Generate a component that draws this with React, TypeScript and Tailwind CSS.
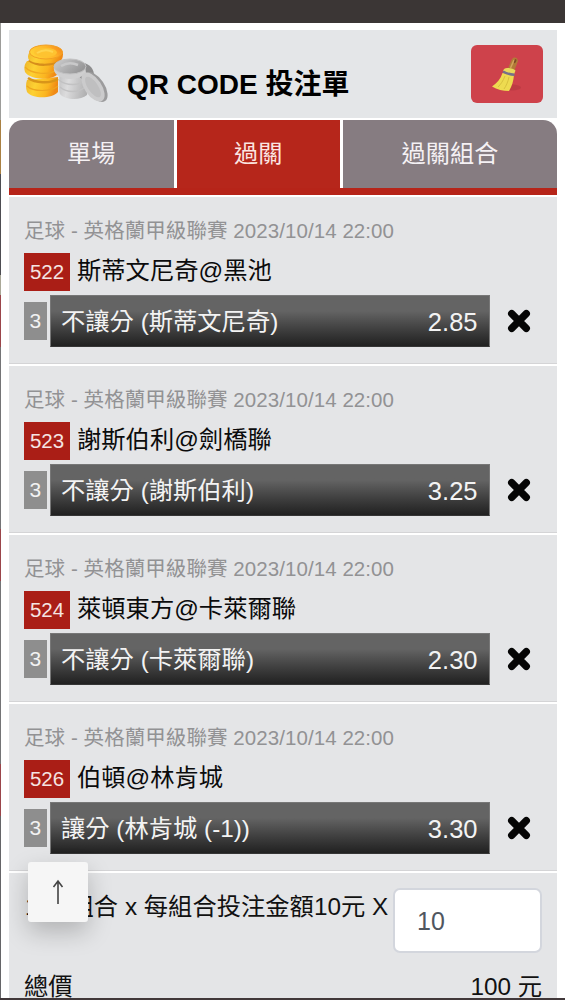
import React from 'react';

type Bet = { id: string; match: string; pick: string; odds: string };

const bets: Bet[] = [
  { id: '522', match: '斯蒂文尼奇@黑池', pick: '不讓分 (斯蒂文尼奇)', odds: '2.85' },
  { id: '523', match: '謝斯伯利@劍橋聯', pick: '不讓分 (謝斯伯利)', odds: '3.25' },
  { id: '524', match: '萊頓東方@卡萊爾聯', pick: '不讓分 (卡萊爾聯)', odds: '2.30' },
  { id: '526', match: '伯頓@林肯城', pick: '讓分 (林肯城 (-1))', odds: '3.30' },
];

function Coins() {
  return (
    <svg width="88" height="62" viewBox="0 0 88 62" aria-hidden="true">
      <defs>
        <linearGradient id="gold" x1="0" x2="1" y1="0" y2="0.2">
          <stop offset="0" stopColor="#eeb52a" />
          <stop offset="0.35" stopColor="#fdd133" />
          <stop offset="0.75" stopColor="#fbb520" />
          <stop offset="1" stopColor="#f08a16" />
        </linearGradient>
        <linearGradient id="goldTop" x1="0" x2="1" y1="0.6" y2="0.2">
          <stop offset="0" stopColor="#ffd236" />
          <stop offset="0.6" stopColor="#ffb528" />
          <stop offset="1" stopColor="#f5861a" />
        </linearGradient>
        <linearGradient id="silver" x1="0" x2="1" y1="0" y2="0.2">
          <stop offset="0" stopColor="#bcbcbd" />
          <stop offset="0.4" stopColor="#dcdcdd" />
          <stop offset="1" stopColor="#b0b0b1" />
        </linearGradient>
        <linearGradient id="silverTop" x1="0" x2="1" y1="0" y2="0.5">
          <stop offset="0" stopColor="#d2d2d3" />
          <stop offset="0.5" stopColor="#b2b2b3" />
          <stop offset="1" stopColor="#969697" />
        </linearGradient>
      </defs>
      <path d="M4 36q-2 6 0 12c5 7 25 7 31 0V33z" fill="url(#gold)" />
      <path d="M4 42c6 6 24 6 31 0" fill="none" stroke="#eda51f" strokeWidth="1.2" />
      <path d="M5 34c7 5 22 6 30 1" fill="none" stroke="#d99519" strokeWidth="2.5" />
      <path d="M4 17q-4 5-2 11c5 8 27 9 33 2V17z" fill="url(#gold)" />
      <path d="M2 23c6 7 25 9 33 2" fill="none" stroke="#f0a921" strokeWidth="1.2" />
      <path d="M6 16c8 6 23 6 32-1" fill="none" stroke="#d78e1b" strokeWidth="3" />
      <path d="M6 9q-2 4 0 7c6 5 27 5 33-1q2-5 0-8z" fill="url(#gold)" />
      <ellipse cx="23" cy="8" rx="16.500" ry="7" fill="url(#goldTop)" stroke="#f2a024" />
      <ellipse cx="22.500" cy="8.500" rx="11.500" ry="4.500" fill="#fec330" />
      <path d="M14 9q8-5 16-1" fill="none" stroke="#ffdc5b" strokeWidth="2" opacity="0.7" />
      <path d="M35 27c3 7 0 18 2 23 5 6 20 7 27 1l3-27z" fill="url(#silver)" />
      <path d="M36 36c7 6 20 6 27 0M37 43c7 6 18 6 25 0" fill="none" stroke="#c2c2c3" strokeWidth="1.500" />
      <path d="M57 18c7 1 13 4 14 12l-10 7-10-9z" fill="#8d8d8e" />
      <path d="M31 22q-1 6 3 9c8 6 23 5 29-2l-1-8z" fill="#cfcfd0" />
      <ellipse cx="47" cy="22.500" rx="16" ry="7.500" fill="url(#silverTop)" stroke="#c2c2c3" />
      <path d="M38 22q8-5 17-1" fill="none" stroke="#c9c9ca" strokeWidth="2.500" />
      <ellipse cx="72.500" cy="43" rx="9" ry="17" transform="rotate(-34 72.500 43)" fill="#9c9c9d" />
      <ellipse cx="70" cy="43" rx="8.500" ry="16.500" transform="rotate(-34 70 43)" fill="#cbcbcc" />
      <ellipse cx="70" cy="43" rx="5" ry="12" transform="rotate(-34 70 43)" fill="#bfbfc0" />
    </svg>
  );
}

function Broom() {
  return (
    <svg width="30" height="36" viewBox="0 0 30 36" aria-hidden="true">
      <ellipse cx="20" cy="31.500" rx="9" ry="3" fill="#a63238" opacity="0.4" />
      <path d="M15.500 13.500 19.700 3.500c1.600-3.500 6.600-2.300 6.200 1.700L22 15.500z" fill="#b27a38" />
      <path d="m18.500 12 3.500-8" stroke="#d3a45c" strokeWidth="1.500" />
      <ellipse cx="23.200" cy="5.200" rx="1" ry="2.200" transform="rotate(24 23.200 5.200)" fill="#7d4c25" />
      <path d="M10.500 17C8.500 23 5 27 0 30.500 5 33.500 11 35 17 35c3-5 4.500-10 5-16z" fill="#eedb50" />
      <path d="M13 20C11 25 9 28 6 31M17 21c-1 5-3 9-5 12" fill="none" stroke="#d8c03e" strokeWidth="1" />
      <path d="M11 15q1-3.500 5-3 5 0 7.500 2.500l-1.500 4q-5 0-11-3.500z" fill="#e9d85c" />
      <path d="M11 15.500q5 3 11.500 3.300" fill="none" stroke="#77708a" strokeWidth="2.600" />
    </svg>
  );
}

function BetRow({ bet }: { bet: Bet }) {
  return (
    <section className="h-[169px] shrink-0 border-b-2 border-white bg-[#e4e5e7] pl-[15px] shadow-[inset_0_-1px_0_#d4d4d6]">
      <div className="h-[56px] pt-[19px] text-[20.500px] leading-[30px] tracking-[0.07px] text-[#929294]">足球 - 英格蘭甲級聯賽 2023/10/14 22:00</div>
      <div className="flex h-[38px] items-center">
        <span className="flex h-[38px] w-[46px] items-center justify-center bg-[#aa1e16] text-[20.500px] text-[#f5e4e2]">{bet.id}</span>
        <span className="ml-[7px] text-[24.300px] leading-[34px] text-[#0b0b0c] -mt-[2px]">{bet.match}</span>
      </div>
      <div className="mt-1 flex h-[52px] items-center">
        <span className="flex h-[38px] w-[22.500px] items-center justify-center bg-[#8e8e8e] text-[21px] text-[#f2f2f2]">3</span>
        <div className="ml-[3.500px] flex h-[52px] w-[439.500px] items-center justify-between border border-[#777] border-b-[#353535] bg-linear-to-b from-[#646464] from-30% to-[#212121] pl-[10px] pr-[11px] text-[24.300px] leading-[50px] text-[#f3f3f3]">
          <span className="pt-[2px]">{bet.pick}</span>
          <span className="pt-[2px] text-[25.500px]">{bet.odds}</span>
        </div>
        <svg className="ml-[17.500px]" width="24" height="24" viewBox="0 0 24 24" aria-label="刪除">
          <path d="M4.700 4.700 19.300 19.300M19.300 4.700 4.700 19.300" stroke="#050505" strokeWidth="7.300" strokeLinecap="round" />
        </svg>
      </div>
    </section>
  );
}

export default function App() {
  return (
    <div className="relative flex h-[1000px] w-[565px] flex-col overflow-hidden bg-white font-['Liberation_Sans','Noto_Sans_CJK_TC',sans-serif] whitespace-nowrap">
      <div className="h-[23px] shrink-0 bg-[#3b3635]" />
      <div className="flex h-[975px] shrink-0 overflow-hidden">
        <div className="flex w-px shrink-0 flex-col">
          <div className="h-[97px] bg-[#9d9d9a]" />
          <div className="h-[54px] bg-[#aa8143]" />
          <div className="h-[101px] bg-[#4d4d52]" />
          <div className="h-[20px] bg-[#aaa898]" />
          <div className="h-[52px] bg-[#9b454a]" />
          <div className="h-[182px] bg-[#747476]" />
          <div className="h-[52px] bg-[#9b454a]" />
          <div className="h-[183px] bg-[#747476]" />
          <div className="h-[52px] bg-[#9b454a]" />
          <div className="grow bg-[#656568]" />
        </div>
        <main className="ml-2 flex w-[548px] shrink-0 flex-col pt-[7px]">
          <header className="flex h-[88px] shrink-0 bg-[#e4e6e8]">
            <div className="pl-[14px] pt-[14px]"><Coins /></div>
            <h1 className="ml-[16px] mt-[35px] text-[28px] leading-[40px] font-bold text-black">QR CODE 投注單</h1>
            <button className="mt-[15px] ml-auto mr-[14px] flex h-[58px] w-[72px] items-center justify-center rounded-[6px] bg-[#ce424b]"><Broom /></button>
          </header>
          <nav className="mt-[2px] flex h-[75px] shrink-0 gap-[3px] border-b-[7px] border-[#b62419] text-[24.200px] leading-[68px] text-[#f5f1f4]">
            <div className="w-[164.500px] rounded-tl-[14px] bg-[#867c81] text-center">單場</div>
            <div className="w-[163.500px] bg-[#b6261b] text-center text-[#fbe5e1]">過關</div>
            <div className="grow rounded-tr-[14px] bg-[#867c81] text-center">過關組合</div>
          </nav>
          <div className="mt-[2px] flex flex-col">
            {bets.map((bet) => <BetRow key={bet.id} bet={bet} />)}
            <footer className="h-[130px] bg-[#e4e5e7] pl-[15px] pr-[15px]">
              <div className="flex h-[97px]">
                <span className="w-[369px] pt-[17px] pl-px text-[24.300px] leading-[34px] text-[#111]">1 個組合 x 每組合投注金額10元 X</span>
                <div className="mt-[15px] flex h-[65px] w-[149px] shrink-0 items-center rounded-[7px] border-2 border-[#d3d6dd] bg-white pl-[22px] pt-[2px] text-[25px] text-[#50565f]">10</div>
              </div>
              <div className="flex justify-between text-[24.300px] leading-[34px] text-[#111]">
                <span>總價</span>
                <span>100 元</span>
              </div>
            </footer>
          </div>
        </main>
      </div>
      <div className="h-[2px] shrink-0 bg-[#41383a]" />
      <button className="absolute left-[28px] top-[862px] flex h-[60px] w-[60px] items-center justify-center rounded-[3px] bg-[#f6f6f6] shadow-[0_10px_24px_rgba(0,0,0,0.22)]" aria-label="返回頂部">
        <svg width="14" height="26" viewBox="0 0 14 26">
          <path d="M7 25V2M2.500 8 7 2l4.500 6" fill="none" stroke="#444" strokeWidth="1.600" />
        </svg>
      </button>
    </div>
  );
}
